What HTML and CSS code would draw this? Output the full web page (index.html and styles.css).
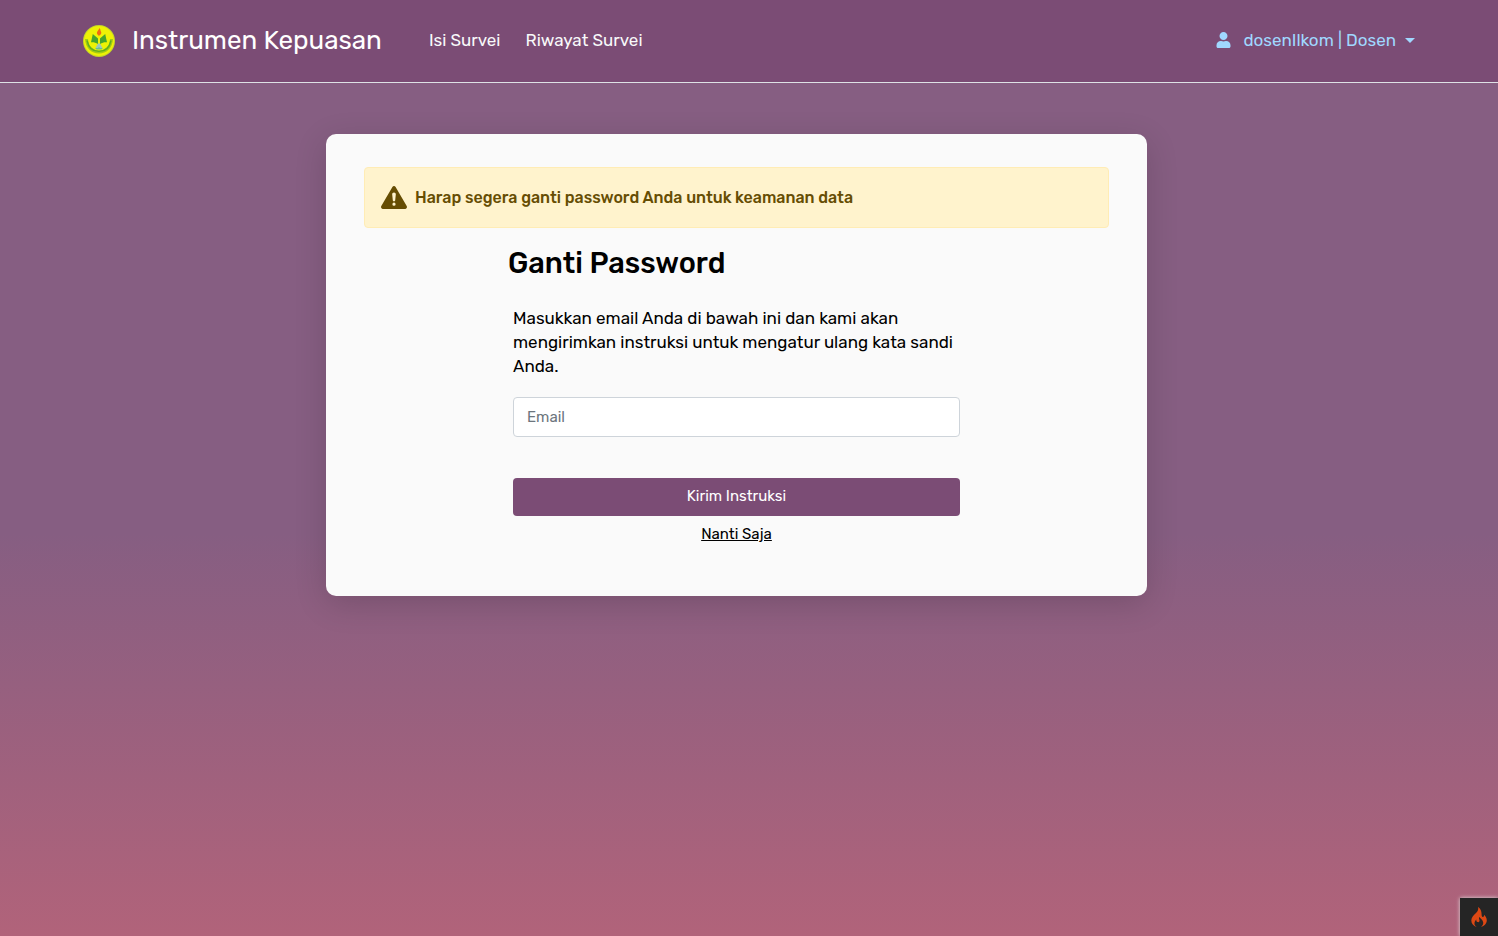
FILE: index.html
```html
<!DOCTYPE html>
<html lang="id">
<head>
<meta charset="utf-8">
<meta name="viewport" content="width=device-width, initial-scale=1">
<title>Ganti Password</title>
<link rel="stylesheet" href="styles.css">
</head>
<body>
<header class="navbar">
  <div class="navbar-inner">
    <a class="brand" href="#">
      <svg class="brand-logo" viewBox="0 0 32 32" aria-hidden="true">
        <circle cx="16" cy="16" r="16" fill="#c3d62a"/>
        <circle cx="16" cy="16" r="15" fill="#eef205"/>
        <path d="M3.500 14C4 22.500 9.500 27 16 27s12-4.500 12.500-13" fill="none" stroke="#a4cc14" stroke-width="3"/>
        <path d="M4 15.500C5.500 23 10 26.400 16 26.400S26.500 23 28 15.500" fill="none" stroke="#5fae20" stroke-width="1.400"/>
        <path d="M9.800 9l5.200 4.500v5.500c-2.500-1.500-4.500-2-7-1.700zM22.200 9L17 13.500V19c2.500-1.500 4.500-2 7-1.700z" fill="#45a52c"/>
        <path d="M15 18.500h2l2.500 4.500h-7z" fill="#9cc6ba"/>
        <path d="M12 23h3l1-1 1 1h3l-1.500 1.500h-5z" fill="#6abf8e"/>
        <path d="M16.500 3c-.5 2-2.600 3-2.600 5 0 1.300 1 2 2 2.800 1.300-.7 2.400-1.500 2.400-3 0-1-.8-1.500-.8-2.500 0-1-.7-1.500-1-2.300z" fill="#f26a12"/>
      </svg>
      <span>Instrumen Kepuasan</span>
    </a>
    <nav class="nav-links">
      <a href="#">Isi Survei</a>
      <a href="#">Riwayat Survei</a>
    </nav>
    <button class="user-menu" type="button" aria-haspopup="true">
      <svg class="user-icon" viewBox="0 0 448 512" aria-hidden="true"><path fill="currentColor" d="M224 256c70.700 0 128-57.300 128-128S294.700 0 224 0 96 57.300 96 128s57.300 128 128 128zm89.600 32h-16.700c-22.200 10.200-46.900 16-72.900 16s-50.600-5.800-72.900-16h-16.700C60.200 288 0 348.200 0 422.400V464c0 26.500 21.500 48 48 48h352c26.500 0 48-21.500 48-48v-41.600c0-74.200-60.200-134.400-134.400-134.400z"/></svg>
      <span>dosenIlkom | Dosen</span>
      <span class="caret"></span>
    </button>
  </div>
</header>

<main class="page">
  <section class="card">
    <div class="alert" role="alert">
      <svg class="alert-icon" viewBox="0 0 26 23" aria-hidden="true"><path fill="currentColor" fill-rule="evenodd" d="M11.400.9a1.900 1.900 0 0 1 3.200 0l11.100 19.200c.7 1.300-.1 2.900-1.500 2.900H1.800C.4 23-.4 21.400.3 20.100zM13 6.500c-1.100 0-1.900.9-1.800 2l.6 5.800c.1 1.500 2.300 1.500 2.400 0l.6-5.800c.1-1.100-.7-2-1.800-2zm0 10.100a1.600 1.600 0 1 0 0 3.200 1.600 1.600 0 0 0 0-3.200z"/></svg>
      <span>Harap segera ganti password Anda untuk keamanan data</span>
    </div>
    <div class="reset">
      <h1 class="reset-title">Ganti Password</h1>
      <form class="reset-form">
        <p class="reset-text">Masukkan email Anda di bawah ini dan kami akan mengirimkan instruksi untuk mengatur ulang kata sandi Anda.</p>
        <input class="field" type="email" name="email" placeholder="Email" aria-label="Email">
        <button class="submit" type="submit">Kirim Instruksi</button>
        <a class="later" href="#">Nanti Saja</a>
      </form>
    </div>
  </section>
</main>

<button class="debug-toggle" type="button" aria-label="Debug toolbar">
  <svg class="debug-icon" viewBox="0 0 16 20" aria-hidden="true"><path fill="#dd4814" d="M7 0c.8 2.500-.3 4.200-2 6C3 8 .3 10.300.3 13.500.3 16.500 2.500 19 5.600 20c-1.600-1.200-2.300-2.400-2.100-4 .1-1.500 1-2.500 1.800-3.500-.1 1.300.3 2.300 1.400 2.600 1.300.3 2-.7 1.800-1.900-.2-1-.8-1.800-.3-3.200 1 1.400 3.800 2.800 4 5.500.2 2-.8 3.400-2.200 4.500 3.400-1 5.800-3.300 5.800-6.700 0-2.700-1.500-4.200-2.800-5.600.2 1.300-.2 2.100-1 2.200-1.200.1-1.400-1.200-1.400-2.600C10.600 4.300 9.500 1.500 7 0z"/></svg>
</button>
</body>
</html>
```
FILE: styles.css
```css
* {
  box-sizing: border-box;
}

body {
  margin: 0;
  min-height: 100vh;
  font-family: Rubik, Roboto, sans-serif;
  font-size: 17px;
  line-height: 24px;
  color: #000;
  background: linear-gradient(#865e82 57%, #b1637a) no-repeat;
}

a {
  color: inherit;
  text-decoration: none;
}

button {
  font: inherit;
  border: 0;
  cursor: pointer;
}

.navbar {
  background: #7b4c75;
  border-bottom: 1px solid #dee2e6;
  color: #f8f9fa;
}

.navbar-inner {
  display: flex;
  align-items: center;
  max-width: 1332px;
  min-height: 82px;
  margin: 0 auto;
}

.brand {
  display: flex;
  align-items: center;
  gap: 17px;
  color: #fff;
  font-size: 26px;
}

.brand-logo {
  width: 32px;
  height: 32px;
}

.nav-links {
  display: flex;
  gap: 25px;
  margin-left: 47px;
  padding-bottom: 2px;
}

.user-menu {
  display: flex;
  align-items: center;
  margin-left: auto;
  padding: 0 0 2px;
  background: none;
  color: #a0d8ff;
}

.user-icon {
  width: 15px;
  height: 16px;
  margin-right: 12px;
}

.caret {
  margin-left: 9px;
  border: 5px solid transparent;
  border-top-color: currentColor;
  border-bottom: 0;
}

.page {
  display: flex;
  justify-content: center;
  padding: 51px 25px 60px 0;
}

.card {
  width: 100%;
  max-width: 821px;
  padding: 33px 38px 50px;
  border-radius: 10px;
  background: #fafafa;
  box-shadow: 0 8px 32px rgba(0, 0, 0, 0.15);
}

.alert {
  display: flex;
  align-items: center;
  gap: 8px;
  padding: 17px 16px;
  border: 1px solid #ffecb5;
  border-radius: 4px;
  background: #fff3cd;
  color: #664d03;
  font-size: 16px;
  font-weight: 500;
  line-height: 25px;
}

.alert-icon {
  width: 26px;
  height: 23px;
}

.reset {
  max-width: 457px;
  margin: 16px auto 0;
}

.reset-title {
  margin: 0;
  font-size: 29px;
  font-weight: 500;
  line-height: 38px;
}

.reset-form {
  display: flex;
  flex-direction: column;
  padding: 24px 5px 0;
}

.reset-text {
  margin: 0 0 19px;
}

.field {
  width: 100%;
  height: 40px;
  padding: 0 13px;
  border: 1px solid #ced4da;
  border-radius: 4px;
  background: #fff;
  font: inherit;
  font-size: 15px;
}

.field::placeholder {
  color: #6c757d;
}

.submit {
  margin-top: 41px;
  padding: 6px 12px 8px;
  border-radius: 4px;
  background: #7b4c75;
  color: #fff;
  font-size: 15px;
}

.later {
  align-self: center;
  margin-top: 6px;
  font-size: 15px;
  text-decoration: underline;
}

.debug-toggle {
  position: fixed;
  right: 0;
  bottom: 0;
  width: 38px;
  height: 38px;
  padding: 9px 11px;
  background: #252525;
  box-shadow: 0 0 4px #dfdfdf;
}

.debug-icon {
  display: block;
  width: 16px;
  height: 20px;
}
```
